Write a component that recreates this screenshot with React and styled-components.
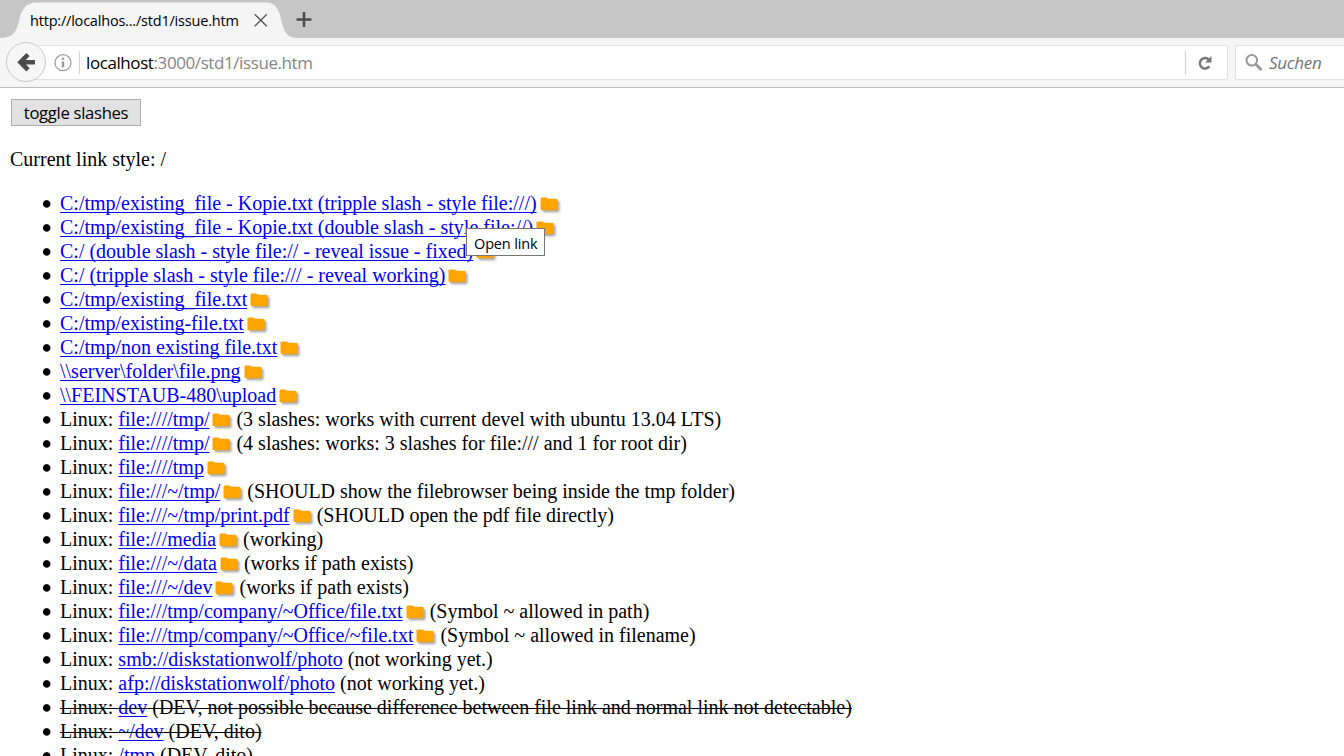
import React from "react";
import styled, { createGlobalStyle } from "styled-components";

const GlobalStyle = createGlobalStyle`
  *, *::before, *::after { box-sizing: border-box; }
  html, body { margin: 0; padding: 0; background: #fff; overflow: hidden; }
`;

const ui = `"Open Sans", "Noto Sans", sans-serif`;

const Window = styled.div`
  display: flex;
  flex-direction: column;
  width: 1344px;
  height: 756px;
  overflow: hidden;
  background: #fff;
`;

const TabStrip = styled.div`
  display: flex;
  flex: none;
  height: 38px;
  background: #c6c6c6;
`;

const Tab = styled.div`
  position: relative;
  display: flex;
  align-items: center;
  width: 296px;
  height: 38px;
  padding: 3px 0 0 30px;
`;

const TabShape = styled.svg`
  position: absolute;
  left: 0;
  top: 0;
`;

const TabTitle = styled.span`
  position: relative;
  width: 224px;
  font: 14.5px/20px ${ui};
  letter-spacing: -0.2px;
  color: #000;
  white-space: nowrap;
`;

const TabIcon = styled.svg`
  position: relative;
  flex: none;
`;

const NewTab = styled.div`
  display: flex;
  align-items: center;
  padding-top: 1px;
`;

const Toolbar = styled.div`
  display: flex;
  flex: none;
  height: 50px;
  padding-top: 7px;
  background: #f5f5f5;
  border-bottom: 1px solid #bdbdbd;
`;

const BackButton = styled.div`
  position: relative;
  flex: none;
  width: 40px;
  height: 40px;
  margin: -3px 0 0 6px;
  display: flex;
  align-items: center;
  justify-content: center;
  border: 1px solid #c9c9c9;
  border-radius: 50%;
  background: #f6f6f6;
`;

const AddressBar = styled.div`
  display: flex;
  flex: none;
  align-items: center;
  width: 1202px;
  height: 35px;
  margin-left: -20px;
  padding-left: 27px;
  border: 1px solid #e1e1e1;
  border-radius: 2px;
  background: #fff;
`;

const Divider = styled.span`
  flex: none;
  width: 1px;
  height: 23px;
  margin-left: ${(p) => p.$gap || 0}px;
  background: #d4d4d4;
`;

const Url = styled.span`
  flex: 1;
  padding-left: 6px;
  font: 17px/24px ${ui};
  letter-spacing: -0.41px;
  color: #858585;
  white-space: nowrap;
`;

const Host = styled.span`
  color: #000;
`;

const Reload = styled.span`
  display: flex;
  align-items: center;
  justify-content: center;
  width: 41px;
  padding-right: 3px;
`;

const SearchBar = styled.div`
  display: flex;
  align-items: center;
  flex: none;
  width: 120px;
  height: 35px;
  margin-left: 7px;
  padding-left: 9px;
  border: 1px solid #e1e1e1;
  border-radius: 2px;
  background: #fff;
`;

const SearchHint = styled.span`
  padding-left: 6px;
  font: italic 17px/24px ${ui};
  letter-spacing: -0.25px;
  color: #757575;
`;

const Page = styled.main`
  flex: 1;
  min-height: 0;
  padding: 11px 10px 0;
  font: 20px/24px "Liberation Serif", "Times New Roman", serif;
  font-variant-ligatures: none;
  color: #000;
`;

const ToggleButton = styled.button`
  display: block;
  width: 130px;
  height: 27px;
  margin: 0 0 0 1px;
  padding: 0;
  border: 1px solid #adadad;
  border-radius: 0;
  background: #e1e1e1;
  font: 16.7px/24px ${ui};
  letter-spacing: -0.32px;
  color: #000;
  white-space: nowrap;
`;

const Status = styled.p`
  margin: 21px 0 20px;
`;

const List = styled.ul`
  margin: 0;
  padding-left: 50px;
  list-style: none;
`;

const Item = styled.li`
  position: relative;
  height: 24px;
  white-space: pre;
  text-decoration: ${(p) => (p.$struck ? "line-through" : "none")};
  text-decoration-thickness: 1px;

  &::before {
    content: "";
    position: absolute;
    left: -18px;
    top: 8px;
    width: 10px;
    height: 10px;
    background: radial-gradient(circle at 4.7px 4.9px, #000 3.3px, transparent 4.2px);
  }
`;

const Link = styled.a`
  color: #0000ee;
  text-decoration: underline;
  text-decoration-thickness: 1px;
  text-underline-offset: 2px;
  text-decoration-skip-ink: none;
`;

const FolderSvg = styled.svg`
  display: inline-block;
  width: 20px;
  height: 16px;
  margin: 0 -1px 0 3px;
  vertical-align: -3px;
  overflow: visible;
  filter: drop-shadow(2px 2px 1px rgba(0, 0, 0, 0.35));
`;

const Tooltip = styled.div`
  position: absolute;
  left: 466px;
  top: 228px;
  width: 79px;
  height: 28px;
  padding-left: 7px;
  border: 1px solid #767676;
  background: #fff;
  font: 14.5px/29px ${ui};
  letter-spacing: -0.15px;
  color: #000;
  white-space: nowrap;
`;

const Folder = () => (
  <FolderSvg viewBox="0 0 20 16">
    <path d="M1.700 .4H6.200Q7.100 .4 7.500 1.300L7.800 1.800H16.100Q17.600 1.800 17.600 3.200V11.800Q17.600 13.200 16.100 13.200H1.900Q.5 13.200 .5 11.800V1.700Q.5 .4 1.700 .4Z" fill="#ffa500" />
  </FolderSvg>
);

const items = [
  { link: "C:/tmp/existing_file - Kopie.txt (tripple slash - style file:///)", folder: true },
  { link: "C:/tmp/existing_file - Kopie.txt (double slash - style file://)", folder: true },
  { link: "C:/ (double slash - style file:// - reveal issue - fixed)", folder: true },
  { link: "C:/ (tripple slash - style file:/// - reveal working)", folder: true },
  { link: "C:/tmp/existing_file.txt", folder: true },
  { link: "C:/tmp/existing-file.txt", folder: true },
  { link: "C:/tmp/non existing file.txt", folder: true },
  { link: "\\\\server\\folder\\file.png", folder: true },
  { link: "\\\\FEINSTAUB-480\\upload", folder: true },
  { pre: "Linux: ", link: "file:////tmp/", folder: true, post: " (3 slashes: works with current devel with ubuntu 13.04 LTS)" },
  { pre: "Linux: ", link: "file:////tmp/", folder: true, post: " (4 slashes: works: 3 slashes for file:/// and 1 for root dir)" },
  { pre: "Linux: ", link: "file:////tmp", folder: true },
  { pre: "Linux: ", link: "file:///~/tmp/", folder: true, post: " (SHOULD show the filebrowser being inside the tmp folder)" },
  { pre: "Linux: ", link: "file:///~/tmp/print.pdf", folder: true, post: " (SHOULD open the pdf file directly)" },
  { pre: "Linux: ", link: "file:///media", folder: true, post: " (working)" },
  { pre: "Linux: ", link: "file:///~/data", folder: true, post: " (works if path exists)" },
  { pre: "Linux: ", link: "file:///~/dev", folder: true, post: " (works if path exists)" },
  { pre: "Linux: ", link: "file:///tmp/company/~Office/file.txt", folder: true, post: " (Symbol ~ allowed in path)" },
  { pre: "Linux: ", link: "file:///tmp/company/~Office/~file.txt", folder: true, post: " (Symbol ~ allowed in filename)" },
  { pre: "Linux: ", link: "smb://diskstationwolf/photo", post: " (not working yet.)" },
  { pre: "Linux: ", link: "afp://diskstationwolf/photo", post: " (not working yet.)" },
  { pre: "Linux: ", link: "dev", post: " (DEV, not possible because difference between file link and normal link not detectable)", struck: true },
  { pre: "Linux: ", link: "~/dev", post: " (DEV, dito)", struck: true },
  { pre: "Linux: ", link: "/tmp", post: " (DEV, dito)", struck: true },
];

export default function App() {
  return (
    <Window>
      <GlobalStyle />
      <TabStrip>
        <Tab>
          <TabShape width="300" height="38" viewBox="0 0 300 38">
            <path d="M0 38C12 38 16 33 18.500 23C21 10 25 2.500 37 2.500H265C277 2.500 279 10 282 23C284.500 33 288 38 298 38Z" fill="#f5f5f5" />
          </TabShape>
          <TabTitle>http://localhos.../std1/issue.htm</TabTitle>
          <TabIcon width="14" height="14" viewBox="0 0 14 14" stroke="#555" strokeWidth="1.3">
            <path d="M.7 .2L12.800 12.300M12.800 .2L.7 12.300" />
          </TabIcon>
        </Tab>
        <NewTab>
          <TabIcon width="16" height="16" viewBox="0 0 16 16" stroke="#4d4d4d" strokeWidth="2.500">
            <path d="M8 0V15M.5 7.500H15.500" />
          </TabIcon>
        </NewTab>
      </TabStrip>
      <Toolbar>
        <BackButton>
          <svg width="20" height="20" viewBox="0 0 20 20" fill="none" stroke="#4c4c4c" strokeWidth="4.600">
            <path d="M12 2.500L4.500 10.200L12 17.900M4.500 10.200H19" strokeLinejoin="miter" />
          </svg>
        </BackButton>
        <AddressBar>
          <svg width="18" height="18" viewBox="0 0 18 18" fill="none" stroke="#999">
            <circle cx="9" cy="8.700" r="8" strokeWidth="1.200" />
            <path d="M9 3.800V5.800M9 7.400V13.300" strokeWidth="2.400" />
          </svg>
          <Divider $gap={7} />
          <Url><Host>localhost</Host>:3000/std1/issue.htm</Url>
          <Divider />
          <Reload>
            <svg width="16" height="16" viewBox="0 0 16 16" fill="none">
              <path d="M11.600 4.500A5.200 5.200 0 1 0 12.300 11.300" stroke="#777" strokeWidth="2.500" />
              <path d="M14.500 1V7.500H8Z" fill="#777" />
            </svg>
          </Reload>
        </AddressBar>
        <SearchBar>
          <svg width="18" height="18" viewBox="0 0 18 18" fill="none" stroke="#999">
            <circle cx="6.800" cy="6.300" r="5.300" strokeWidth="2" />
            <path d="M10.800 10.300L16.500 16" strokeWidth="2.800" />
          </svg>
          <SearchHint>Suchen</SearchHint>
        </SearchBar>
      </Toolbar>
      <Page>
        <ToggleButton>toggle slashes</ToggleButton>
        <Status>Current link style: /</Status>
        <List>
          {items.map((it, i) => (
            <Item key={i} $struck={it.struck}>
              {it.pre}
              <Link>{it.link}</Link>
              {it.folder && <Folder />}
              {it.post}
            </Item>
          ))}
        </List>
      </Page>
      <Tooltip>Open link</Tooltip>
    </Window>
  );
}
